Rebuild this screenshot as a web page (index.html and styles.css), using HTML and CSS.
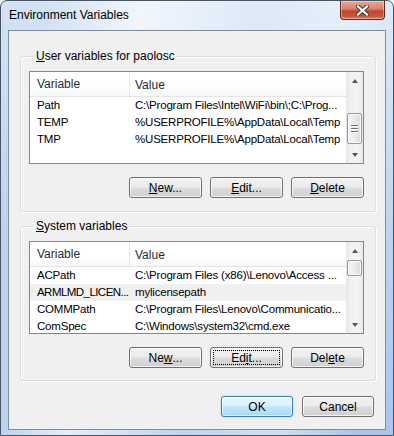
FILE: index.html
```html
<!DOCTYPE html>
<html lang="en">
<head>
    <meta charset="UTF-8">
    <title>Environment Variables</title>
    <link rel="stylesheet" href="styles.css">
</head>
<body>

<div class="window">
    <div class="titlebar">
        <span class="title">Environment Variables</span>
        <div class="close">
            <svg width="13" height="11" viewBox="0 0 13 11">
                <path d="M2 1.5 L11 9.5 M11 1.5 L2 9.5" stroke="#3a3a3a" stroke-width="4.2" stroke-linecap="square"/>
                <path d="M2 1.5 L11 9.5 M11 1.5 L2 9.5" stroke="#ffffff" stroke-width="2.2" stroke-linecap="square"/>
            </svg>
        </div>
    </div>

    <div class="client">
        <div class="group group-user">
            <div class="group-title"><u>U</u>ser variables for paolosc</div>
            <div class="listview">
                <div class="list-main">
                    <div class="list-header">
                        <div class="col-var">Variable</div>
                        <div class="col-val">Value</div>
                    </div>
                    <div class="row"><div class="col-var">Path</div><div class="col-val">C:\Program Files\Intel\WiFi\bin\;C:\Prog...</div></div>
                    <div class="row"><div class="col-var">TEMP</div><div class="col-val">%USERPROFILE%\AppData\Local\Temp</div></div>
                    <div class="row"><div class="col-var">TMP</div><div class="col-val">%USERPROFILE%\AppData\Local\Temp</div></div>
                </div>
                <div class="scrollbar">
                    <div class="sb-btn"><span class="arrow-up"></span></div>
                    <div class="sb-track">
                        <div class="thumb thumb-user">
                            <span class="grip"></span><span class="grip"></span><span class="grip"></span>
                        </div>
                    </div>
                    <div class="sb-btn"><span class="arrow-down"></span></div>
                </div>
            </div>
            <div class="buttons">
                <button class="btn"><u>N</u>ew...</button>
                <button class="btn"><u>E</u>dit...</button>
                <button class="btn"><u>D</u>elete</button>
            </div>
        </div>

        <div class="group group-system">
            <div class="group-title"><u>S</u>ystem variables</div>
            <div class="listview">
                <div class="list-main">
                    <div class="list-header">
                        <div class="col-var">Variable</div>
                        <div class="col-val">Value</div>
                    </div>
                    <div class="row"><div class="col-var">ACPath</div><div class="col-val">C:\Program Files (x86)\Lenovo\Access ...</div></div>
                    <div class="row hot"><div class="col-var tight">ARMLMD_LICEN...</div><div class="col-val">mylicensepath</div></div>
                    <div class="row"><div class="col-var">COMMPath</div><div class="col-val">C:\Program Files\Lenovo\Communicatio...</div></div>
                    <div class="row"><div class="col-var">ComSpec</div><div class="col-val">C:\Windows\system32\cmd.exe</div></div>
                </div>
                <div class="scrollbar">
                    <div class="sb-btn"><span class="arrow-up"></span></div>
                    <div class="sb-track">
                        <div class="thumb thumb-system"></div>
                    </div>
                    <div class="sb-btn"><span class="arrow-down"></span></div>
                </div>
            </div>
            <div class="buttons">
                <button class="btn">Ne<u>w</u>...</button>
                <button class="btn focused"><span class="focus-rect">Ed<u>i</u>t...</span></button>
                <button class="btn">Del<u>e</u>te</button>
            </div>
        </div>

        <div class="dialog-buttons">
            <button class="btn default">OK</button>
            <button class="btn">Cancel</button>
        </div>
    </div>
</div>

</body>
</html>
```

FILE: styles.css
```css
body {
    margin: 0;
    font-family: "Segoe UI", "Liberation Sans", Arial, sans-serif;
    font-size: 12px;
    color: #000;
    background: #fff;
}
.window {
    width: 394px;
    height: 436px;
    box-sizing: border-box;
    border: 1px solid #4a5564;
    border-radius: 7px 7px 0 0;
    padding: 0 7px 5px 7px;
    display: flex;
    flex-direction: column;
    background:
        linear-gradient(100deg, rgba(255,255,255,0) 10%, rgba(255,255,255,0.7) 30%, rgba(255,255,255,0.25) 55%, rgba(255,255,255,0.45) 75%, rgba(255,255,255,0) 92%),
        linear-gradient(to bottom, #d3e3f5 0%, #c2d8f0 40%, #a9c6ea 100%);
}
.titlebar {
    height: 29px;
    display: flex;
    justify-content: space-between;
    align-items: flex-start;
}
.title {
    line-height: 29px;
    padding-left: 1px;
}
.close {
    width: 45px;
    height: 19px;
    box-sizing: border-box;
    margin-right: 1px;
    border: 1px solid #5c2a22;
    border-top: none;
    border-radius: 0 0 4px 4px;
    background: linear-gradient(to bottom, #e9a898 0%, #d8806a 45%, #c4452c 55%, #c9553a 85%, #e08a6e 100%);
    display: flex;
    align-items: center;
    justify-content: center;
    box-shadow: inset 0 0 0 1px rgba(255,255,255,0.35);
}
.client {
    height: 400px;
    box-sizing: border-box;
    border: 1px solid #7f8d9c;
    background: #f0f0f0;
    padding: 25px 9px 0 11px;
}
.group {
    border: 1px solid #d5dfe5;
    border-radius: 3px;
    box-shadow: 1px 1px 0 #fff, inset 1px 1px 0 #fff;
    padding: 0 11px 13px 8px;
}
.group-system {
    margin-top: 14px;
    padding-bottom: 12px;
}
.group-title {
    width: fit-content;
    margin: -8px 0 0 5px;
    padding: 0 2px;
    line-height: 15px;
    background: #f0f0f0;
}
.listview {
    margin-top: 7px;
    height: 93px;
    box-sizing: border-box;
    border: 1px solid #828790;
    background: #fff;
    display: flex;
}
.list-main {
    flex: 1;
    min-width: 0;
    overflow: hidden;
}
.list-header {
    height: 23px;
    border-bottom: 1px solid #e5e5e5;
    background: linear-gradient(to bottom, #ffffff 0%, #ffffff 60%, #f7f8fa 100%);
    display: flex;
    align-items: center;
    padding-top: 1px;
    color: #1e2b3a;
}
.list-header .col-var {
    border-right: 1px solid #e5e5e5;
    height: 24px;
    line-height: 24px;
    margin-top: -1px;
    width: 92px;
}
.row {
    height: 17px;
    line-height: 17px;
    display: flex;
    white-space: nowrap;
    font-size: 11.5px;
    letter-spacing: -0.2px;
}
.row.hot {
    background: #f0f0f0;
}
.col-var {
    width: 93px;
    padding-left: 7px;
    flex-shrink: 0;
    overflow: hidden;
    white-space: nowrap;
}
.col-var.tight {
    letter-spacing: -0.55px;
}
.col-val {
    padding-left: 5px;
    overflow: hidden;
    white-space: nowrap;
}
.scrollbar {
    width: 17px;
    flex-shrink: 0;
    display: flex;
    flex-direction: column;
    background: linear-gradient(to right, #e6e6e6 0%, #f2f2f2 30%, #f4f4f4 70%, #e9e9e9 100%);
}
.sb-btn {
    height: 17px;
    display: flex;
    align-items: center;
    justify-content: center;
}
.arrow-up {
    width: 0;
    height: 0;
    border-left: 3.5px solid transparent;
    border-right: 3.5px solid transparent;
    border-bottom: 4px solid #4d5763;
}
.arrow-down {
    width: 0;
    height: 0;
    border-left: 3.5px solid transparent;
    border-right: 3.5px solid transparent;
    border-top: 4px solid #4d5763;
}
.sb-track {
    flex: 1;
    padding: 0 1px;
}
.thumb {
    box-sizing: border-box;
    border: 1px solid #979797;
    border-radius: 2px;
    background: linear-gradient(to right, #f3f3f3 0%, #ebebeb 50%, #dbdbdb 100%);
    box-shadow: inset 0 0 0 1px #fafafa;
    display: flex;
    flex-direction: column;
    align-items: center;
    justify-content: center;
    gap: 2px;
}
.thumb-user {
    margin-top: 24px;
    height: 31px;
}
.thumb-system {
    margin-top: 1px;
    height: 16px;
}
.grip {
    width: 7px;
    height: 1px;
    background: #6e6e6e;
    box-shadow: 0 1px 0 #fff;
}
.buttons {
    margin-top: 13px;
    display: flex;
    justify-content: flex-end;
    gap: 8px;
}
.btn {
    width: 73px;
    height: 21px;
    padding: 0;
    font-family: inherit;
    font-size: 12px;
    color: #000;
    border: 1px solid #707070;
    border-radius: 3px;
    background: linear-gradient(to bottom, #f2f2f2 0%, #ebebeb 48%, #dddddd 52%, #cfcfcf 100%);
    box-shadow: inset 0 0 0 1px rgba(255,255,255,0.75);
    display: flex;
    align-items: center;
    justify-content: center;
}
.btn.focused {
    padding: 2px;
}
.focus-rect {
    flex: 1;
    align-self: stretch;
    display: flex;
    align-items: center;
    justify-content: center;
    border: 1px dotted #000;
}
.dialog-buttons {
    margin-top: 15px;
    display: flex;
    justify-content: flex-end;
    gap: 9px;
    padding-right: 2px;
}
.dialog-buttons .btn {
    width: 72px;
}
.btn.default {
    border-color: #3c7fb1;
    background: linear-gradient(to bottom, #eaf6fd 0%, #d9f0fc 48%, #bee6fd 52%, #a7d9f5 100%);
    box-shadow: inset 0 0 0 1px rgba(255,255,255,0.6), 0 0 2px #8fd0f4;
}
```
